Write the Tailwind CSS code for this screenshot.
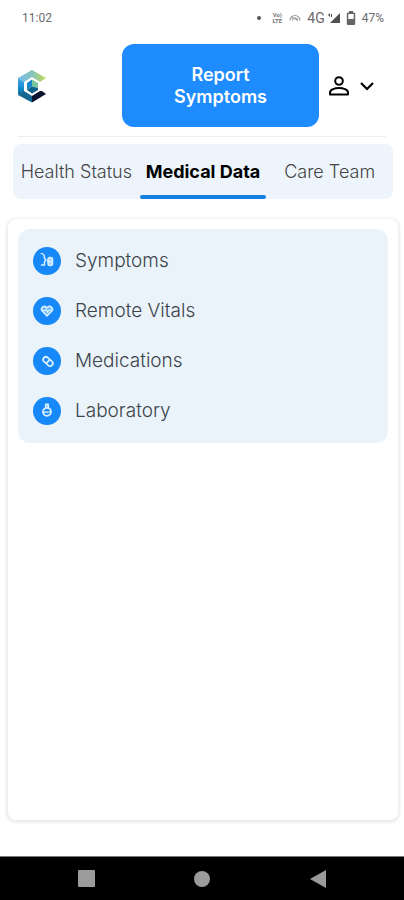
<!DOCTYPE html>
<html lang="en">
<head>
  <meta charset="utf-8">
  <meta name="viewport" content="width=device-width, initial-scale=1.0">
  <title>Medical Data</title>
  <script src="https://cdn.jsdelivr.net/npm/@tailwindcss/browser@4"></script>
</head>
<body class="bg-white min-h-screen flex flex-col font-['Inter',sans-serif]">

  <!-- Status bar -->
  <div class="h-9 pl-[22px] pr-5 flex items-center justify-between font-['Roboto',sans-serif] text-xs text-[#6b6b6b]">
    <span>11:02</span>
    <div class="flex items-center gap-[6px]">
      <span class="w-1 h-1 rounded-full bg-[#555]"></span>
      <span class="ml-1 w-3 text-[6px] leading-[6px] font-bold text-center text-[#777]">Vo)<br>LTE</span>
      <svg class="w-3 h-3 text-[#a0a0a0]" viewBox="0 0 12 12" fill="none" stroke="currentColor" stroke-width="1.2">
        <path d="M1 8.500A5 5 0 0 1 11 8.500M3.500 8.500a2.500 2.500 0 0 1 5 0M2 4.500l7 4" />
      </svg>
      <div class="flex items-center gap-[3px]">
        <span class="text-sm">4G</span>
        <svg class="w-3 h-3 text-[#505050]" viewBox="0 0 12 12" fill="currentColor">
          <path d="M12 1v10H2z" />
          <path d="M0 3l2-2v4zM3 2h1v3H3z" />
        </svg>
      </div>
      <svg class="w-[10px] h-[14px] text-[#666]" viewBox="0 0 10 14" fill="currentColor">
        <path fill-rule="evenodd" d="M3 0h4v1.500h1a1.200 1.200 0 0 1 1.200 1.200v10A1.200 1.200 0 0 1 8 14H2a1.200 1.200 0 0 1-1.200-1.300v-10A1.200 1.200 0 0 1 2 1.500h1zM2.300 3v5h5.400V3z" />
      </svg>
      <span>47%</span>
    </div>
  </div>

  <!-- Header -->
  <header class="mx-[18px] pt-2 pb-[9px] flex items-center border-b border-[#e9f0f2]">
    <a href="#" aria-label="Home">
      <svg class="w-[30px] h-[34px]" viewBox="0 0 30 34">
        <defs>
          <linearGradient id="top" x1="0" x2="1"><stop offset="0" stop-color="#76bdf0" /><stop offset="0.500" stop-color="#84c3bd" /><stop offset="1" stop-color="#c4dc55" /></linearGradient>
          <linearGradient id="side" x1="0" y1="0" x2="0" y2="1"><stop offset="0" stop-color="#4ba6e8" /><stop offset="0.600" stop-color="#118bd0" /><stop offset="1" stop-color="#126c9c" /></linearGradient>
        </defs>
        <path d="M0 9L14 1l14 8-6 4-8-5-8 5z" fill="url(#top)" />
        <path d="M0 9l6 4v10l-6 3z" fill="url(#side)" />
        <path d="M0 26l6-4 8 5v6.500z" fill="#14678f" />
        <path d="M14 27l8-5h2l4 3-14 8.500z" fill="#0b1430" />
        <path d="M9 14l5-3.500v7L9 21z" fill="#1586c6" />
        <path d="M14 10.500l6 3.500v5l-6-1.500z" fill="#7cc49a" />
        <path d="M9 21l5-3.500 6 1.500v2l-6 3.500z" fill="#0b5f8c" />
      </svg>
    </a>
    <button class="ml-auto w-[197px] h-[83px] px-10 rounded-xl bg-[#1e8cff] text-white text-lg leading-[22px] font-semibold">Report Symptoms</button>
    <button class="ml-2 mr-[11px] flex items-center gap-2 text-black" aria-label="Account">
      <svg class="w-6 h-6" viewBox="0 0 24 24" fill="none" stroke="currentColor" stroke-width="2">
        <circle cx="12" cy="7" r="3.800" />
        <path d="M3 20.500v-2c0-3.200 5-4.500 9-4.500s9 1.300 9 4.500v2z" stroke-linejoin="round" />
      </svg>
      <svg class="w-4 h-4" viewBox="0 0 16 16" fill="none" stroke="currentColor" stroke-width="2.200">
        <path d="M2 5l6 6 6-6" />
      </svg>
    </button>
  </header>

  <!-- Tabs -->
  <nav class="mt-[7px] ml-[13px] mr-[11px] h-[55px] grid grid-cols-3 rounded-lg bg-[#edf4fb] text-lg whitespace-nowrap">
    <a href="#" class="flex items-center justify-center font-light text-[#444]">Health Status</a>
    <a href="#" class="flex flex-col text-center font-bold text-black" aria-current="page">
      <span class="flex-1 pt-1 flex items-center justify-center">Medical Data</span>
      <span class="h-1 rounded-full bg-[#1580e0]"></span>
    </a>
    <a href="#" class="flex items-center justify-center font-light text-[#444]">Care Team</a>
  </nav>

  <!-- Content -->
  <main class="mt-5 ml-2 mr-[6px] mb-9 flex-1 p-[10px] rounded-lg bg-white shadow-[0_1px_3px_2px_rgba(0,0,0,0.080)]">
    <ul class="px-[15px] py-[7px] rounded-xl bg-[#ebf3fa] text-[19px] font-light text-[#3c444c]">
      <li>
        <a href="#" class="h-[50px] flex items-center gap-[14px]">
          <span class="w-7 h-7 rounded-full bg-[#1688f8] flex items-center justify-center">
            <svg class="w-4 h-4" viewBox="0 0 16 16" fill="none" stroke="#d8f0ff" stroke-width="1.500" stroke-linecap="round" stroke-linejoin="round">
              <path d="M2 0l3 2 .5 3L7 7.500 5.500 8.500V12H2.500" />
              <rect x="9" y="4.500" width="4.500" height="8" rx="2" fill="#a5d5fb" />
              <path d="M9 8.500h4" />
            </svg>
          </span>
          Symptoms
        </a>
      </li>
      <li>
        <a href="#" class="h-[50px] flex items-center gap-[14px]">
          <span class="w-7 h-7 rounded-full bg-[#1688f8] flex items-center justify-center">
            <svg class="w-[14px] h-[14px]" viewBox="0 0 16 16" fill="#5fb2fb" stroke="#d8f0ff" stroke-width="1.900" stroke-linecap="round" stroke-linejoin="round">
              <path d="M8 13.500L2.800 8.300a3.200 3.200 0 0 1 0-4.500 3.200 3.200 0 0 1 4.500 0l.7.7.7-.7a3.200 3.200 0 0 1 4.500 0 3.200 3.200 0 0 1 0 4.500z" />
              <path d="M3 7.500h2.500L7 6l1.500 3.500L10 7h3" stroke-width="1.500" fill="none" />
            </svg>
          </span>
          Remote Vitals
        </a>
      </li>
      <li>
        <a href="#" class="h-[50px] flex items-center gap-[14px]">
          <span class="w-7 h-7 rounded-full bg-[#1688f8] flex items-center justify-center">
            <svg class="w-4 h-4" viewBox="0 0 16 16" fill="none" stroke="#d8f0ff" stroke-width="1.800">
              <g transform="rotate(42 9 8.500)">
                <rect x="3.500" y="5.800" width="11" height="5.400" rx="2.700" />
                <path d="M9 6v5" />
              </g>
            </svg>
          </span>
          Medications
        </a>
      </li>
      <li>
        <a href="#" class="h-[50px] flex items-center gap-[14px]">
          <span class="w-7 h-7 rounded-full bg-[#1688f8] flex items-center justify-center">
            <svg class="w-4 h-4" viewBox="0 0 16 16" fill="none" stroke="#d8f0ff" stroke-width="1.800" stroke-linecap="round">
              <path d="M6.800 1.500h2.400M6.800 2v3M9.200 2v3" />
              <circle cx="8" cy="8.800" r="4" />
              <path d="M5 9.500c2-1.500 3 .8 6-1" stroke-width="1.400" />
            </svg>
          </span>
          Laboratory
        </a>
      </li>
    </ul>
  </main>

  <!-- Android navigation -->
  <footer class="h-11 bg-black border-t border-[#777] px-[74px] flex items-center justify-between text-[#9b9b9b]">
    <button class="w-6 h-6 flex items-center justify-center" aria-label="Recent apps">
      <span class="w-[17px] h-[17px] rounded-[1px] bg-current"></span>
    </button>
    <button class="w-6 h-6 flex items-center justify-center" aria-label="Home screen">
      <span class="w-4 h-4 rounded-full bg-current"></span>
    </button>
    <button class="w-6 h-6 flex items-center justify-center" aria-label="Back">
      <svg class="w-4 h-[18px]" viewBox="0 0 16 18" fill="currentColor"><path d="M16 0v18L0 9z" /></svg>
    </button>
  </footer>

</body>
</html>
